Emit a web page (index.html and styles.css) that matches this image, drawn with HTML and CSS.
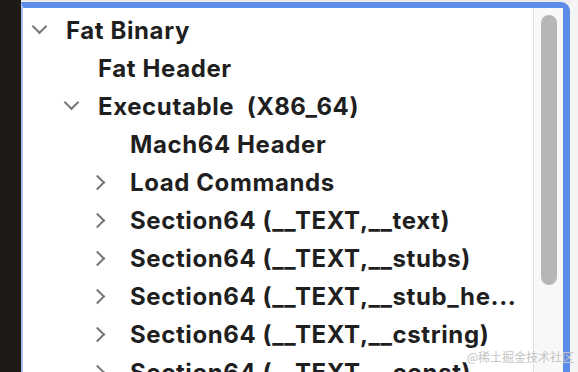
FILE: index.html
```html
<!DOCTYPE html>
<html lang="en">
<head>
    <meta charset="UTF-8">
    <title>Mach-O Tree</title>
    <link rel="stylesheet" href="styles.css">
</head>
<body>
    <div class="sidebar"></div>
    <div class="panel">
        <ul class="tree">
            <li class="row lvl0"><span class="chev down"></span><span class="label">Fat Binary</span></li>
            <li class="row lvl1"><span class="chev"></span><span class="label">Fat Header</span></li>
            <li class="row lvl1"><span class="chev down"></span><span class="label">Executable  (X86_64)</span></li>
            <li class="row lvl2"><span class="chev"></span><span class="label">Mach64 Header</span></li>
            <li class="row lvl2"><span class="chev right"></span><span class="label">Load Commands</span></li>
            <li class="row lvl2"><span class="chev right"></span><span class="label">Section64 (__TEXT,__text)</span></li>
            <li class="row lvl2"><span class="chev right"></span><span class="label">Section64 (__TEXT,__stubs)</span></li>
            <li class="row lvl2"><span class="chev right"></span><span class="label">Section64 (__TEXT,__stub_he...</span></li>
            <li class="row lvl2"><span class="chev right"></span><span class="label">Section64 (__TEXT,__cstring)</span></li>
            <li class="row lvl2"><span class="chev right"></span><span class="label">Section64 (__TEXT,__const)</span></li>
        </ul>
        <div class="scrollbar">
            <div class="thumb"></div>
        </div>
    </div>
    <div class="edge"></div>
    <span class="mark">@稀土掘金技术社区</span>
</body>
</html>
```

FILE: styles.css
```css
* {
    margin: 0;
    padding: 0;
    box-sizing: border-box;
}
body {
    display: flex;
    height: 372px;
    overflow: hidden;
    background-color: #ececec;
    font-family: Inter, "Noto Sans", sans-serif;
    position: relative;
}
.sidebar {
    width: 21px;
    background-color: #1e1a17;
}
.panel {
    flex: 1;
    display: flex;
    margin-top: 2px;
    height: 400px;
    background-color: #fff;
    border-top: 6px solid #5b8de8;
    border-right: 7px solid #5b8de8;
    border-left: 2px solid #a8c3ee;
    border-top-right-radius: 9px;
}
.edge {
    width: 8px;
    background-color: #f4f4f4;
}
.tree {
    flex: 1;
    list-style: none;
    padding-top: 3px;
    min-width: 0;
}
.row {
    height: 38px;
    display: flex;
    align-items: center;
    white-space: pre;
    color: #1f1f1f;
    font-size: 24px;
    letter-spacing: 0.6px;
    font-weight: 700;
}
.lvl0 { padding-left: 7px; }
.lvl1 { padding-left: 39px; }
.lvl2 { padding-left: 71px; }
.chev {
    width: 36px;
    height: 20px;
    flex-shrink: 0;
    position: relative;
}
.chev.down::after,
.chev.right::after {
    content: "";
    position: absolute;
    width: 9px;
    height: 9px;
    border-right: 2px solid #777;
    border-bottom: 2px solid #777;
}
.chev.down::after {
    left: 4px;
    top: 1px;
    transform: rotate(45deg);
}
.chev.right::after {
    left: -2px;
    top: 5px;
    transform: rotate(-45deg);
}
.label {
    overflow: hidden;
}
.scrollbar {
    width: 30px;
    background-color: #f8f8f8;
    border-left: 1px solid #dedede;
    padding: 7px 6px 0 7px;
}
.thumb {
    height: 270px;
    border-radius: 8px;
    background-color: #b6b6b6;
}
.mark {
    position: absolute;
    right: 4px;
    bottom: 7px;
    font-size: 12px;
    color: #c4c4c4;
    font-family: "Noto Sans CJK SC", sans-serif;
}
```
